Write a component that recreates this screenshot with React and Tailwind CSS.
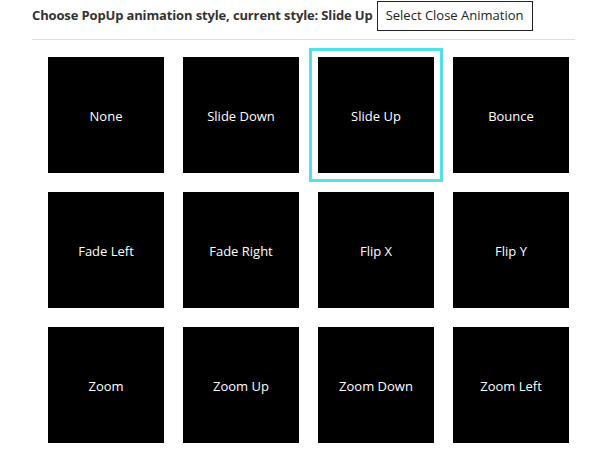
import React from 'react';

const animations = [
    'None', 'Slide Down', 'Slide Up', 'Bounce',
    'Fade Left', 'Fade Right', 'Flip X', 'Flip Y',
    'Zoom', 'Zoom Up', 'Zoom Down', 'Zoom Left',
];

const App = () => {
    const current = 'Slide Up';

    return (
        <div className="w-[600px] h-[450px] bg-white overflow-hidden" style={{ fontFamily: '"Open Sans", "Noto Sans", sans-serif' }}>
            <div className="pl-8 pr-[25px] pt-px">
                {/* Header */}
                <div className="flex items-center gap-[4px] h-[30px]">
                    <p className="text-[13px] font-bold text-[#333] tracking-[-0.14px]">
                        Choose PopUp animation style, current style: {current}
                    </p>
                    <button className="h-[30px] px-[8px] border border-[#222] bg-white text-[13px] text-[#222]">
                        Select Close Animation
                    </button>
                </div>
                <div className="mt-2 h-px bg-[#dddddd]" />

                {/* Animation grid */}
                <div className="grid grid-cols-[repeat(4,116px)] gap-[19px] pl-4 pt-[17px]">
                    {animations.map((name) => (
                        <div
                            key={name}
                            className={`w-[116px] h-[116px] pt-1 bg-black flex items-center justify-center text-white text-[13px] cursor-pointer ${name === current ? 'outline-[3px] outline-solid outline-[#4fe3e6] outline-offset-[6px]' : ''}`}
                        >
                            {name}
                        </div>
                    ))}
                </div>
            </div>
        </div>
    );
};

export default App;
